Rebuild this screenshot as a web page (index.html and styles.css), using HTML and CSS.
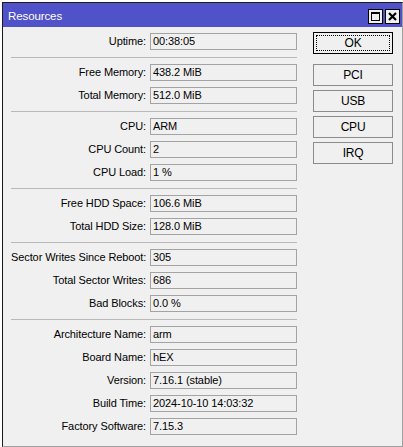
FILE: index.html
```
<!DOCTYPE html>
<html lang="en">
<head>
    <meta charset="UTF-8">
    <title>Resources</title>
    <link rel="stylesheet" href="styles.css">
</head>
<body>
    <div class="window">
        <div class="title-bar">
            <span class="title">Resources</span>
            <div class="title-buttons">
                <span class="tb-btn">
                    <svg width="11" height="11" viewBox="0 0 11 11">
                        <rect x="1.5" y="1.5" width="8" height="8" fill="none" stroke="#000" stroke-width="1"/>
                        <rect x="1" y="1" width="9" height="2" fill="#000"/>
                    </svg>
                </span>
                <span class="tb-btn">
                    <svg width="11" height="11" viewBox="0 0 11 11">
                        <path d="M2 2 L9 9 M9 2 L2 9" stroke="#000" stroke-width="2.2"/>
                    </svg>
                </span>
            </div>
        </div>

        <div class="window-body">
            <div class="fields">
                <div class="group">
                    <div class="row"><span class="label">Uptime:</span><span class="value">00:38:05</span></div>
                </div>
                <div class="sep"></div>
                <div class="group">
                    <div class="row"><span class="label">Free Memory:</span><span class="value">438.2 MiB</span></div>
                    <div class="row"><span class="label">Total Memory:</span><span class="value">512.0 MiB</span></div>
                </div>
                <div class="sep"></div>
                <div class="group">
                    <div class="row"><span class="label">CPU:</span><span class="value">ARM</span></div>
                    <div class="row"><span class="label">CPU Count:</span><span class="value">2</span></div>
                    <div class="row"><span class="label">CPU Load:</span><span class="value">1 %</span></div>
                </div>
                <div class="sep"></div>
                <div class="group">
                    <div class="row"><span class="label">Free HDD Space:</span><span class="value">106.6 MiB</span></div>
                    <div class="row"><span class="label">Total HDD Size:</span><span class="value">128.0 MiB</span></div>
                </div>
                <div class="sep"></div>
                <div class="group">
                    <div class="row"><span class="label">Sector Writes Since Reboot:</span><span class="value">305</span></div>
                    <div class="row"><span class="label">Total Sector Writes:</span><span class="value">686</span></div>
                    <div class="row"><span class="label">Bad Blocks:</span><span class="value">0.0 %</span></div>
                </div>
                <div class="sep"></div>
                <div class="group">
                    <div class="row"><span class="label">Architecture Name:</span><span class="value">arm</span></div>
                    <div class="row"><span class="label">Board Name:</span><span class="value">hEX</span></div>
                    <div class="row"><span class="label">Version:</span><span class="value">7.16.1 (stable)</span></div>
                    <div class="row"><span class="label">Build Time:</span><span class="value">2024-10-10 14:03:32</span></div>
                    <div class="row"><span class="label">Factory Software:</span><span class="value">7.15.3</span></div>
                </div>
            </div>

            <div class="buttons">
                <button class="btn btn-default"><span class="focus">OK</span></button>
                <div class="btn-list">
                    <button class="btn">PCI</button>
                    <button class="btn">USB</button>
                    <button class="btn">CPU</button>
                    <button class="btn">IRQ</button>
                </div>
            </div>
        </div>
    </div>
</body>
</html>
```

FILE: styles.css
```
* {
    margin: 0;
    padding: 0;
    box-sizing: border-box;
}

body {
    font-family: 'Liberation Sans', Arial, sans-serif;
    font-size: 11px;
    letter-spacing: -0.1px;
    color: #000;
    background: #fff;
    width: 403px;
    height: 447px;
    overflow: hidden;
}

.window {
    margin: 2px 0 0 2px;
    width: 401px;
    height: 445px;
    background: #f0f0f0;
    border-top: 1px solid #1a1a1a;
    border-left: 1px solid #1a1a1a;
    border-right: 1px solid #a0a0a0;
    border-bottom: 1px solid #a0a0a0;
    display: flex;
    flex-direction: column;
}

.title-bar {
    height: 24px;
    background: #4f52c9;
    display: flex;
    align-items: center;
    justify-content: space-between;
    padding: 0 2px 0 5px;
}

.title {
    color: #fff;
    font-size: 11.5px;
    padding-top: 1px;
}

.title-buttons {
    display: flex;
    gap: 2px;
    padding-top: 3px;
}

.tb-btn {
    width: 15px;
    height: 15px;
    background: #f0f0f0;
    border: 1px solid #000;
    display: flex;
    align-items: center;
    justify-content: center;
}

.window-body {
    flex: 1;
    display: flex;
    padding: 6px 0 0 8px;
}

/* left column */
.fields {
    width: 286px;
    display: flex;
    flex-direction: column;
}

.group {
    display: flex;
    flex-direction: column;
    gap: 6px;
}

.row {
    display: flex;
    gap: 4px;
    height: 17px;
}

.label {
    width: 135px;
    text-align: right;
    line-height: 17px;
    white-space: nowrap;
}

.value {
    width: 147px;
    height: 17px;
    border: 1px solid #a3a3a3;
    padding-left: 2px;
    line-height: 15px;
    white-space: nowrap;
}

.sep {
    height: 1px;
    background: #b9b9b9;
    margin: 7px 0 6px;
}

/* right column */
.buttons {
    margin-left: 16px;
    width: 80px;
    display: flex;
    flex-direction: column;
}

.btn {
    font-family: inherit;
    font-size: 12px;
    letter-spacing: -0.2px;
    color: #000;
    width: 80px;
    height: 22px;
    background: #f0f0f0;
    border: 1px solid #8c8c8c;
}

.btn-default {
    border: 1px solid #000;
    padding: 2px;
    margin-top: -1px;
}

.focus {
    display: flex;
    align-items: center;
    justify-content: center;
    width: 100%;
    height: 100%;
    border: 1px dotted #000;
}

.btn-list {
    margin-top: 10px;
    display: flex;
    flex-direction: column;
    gap: 4px;
}
```
